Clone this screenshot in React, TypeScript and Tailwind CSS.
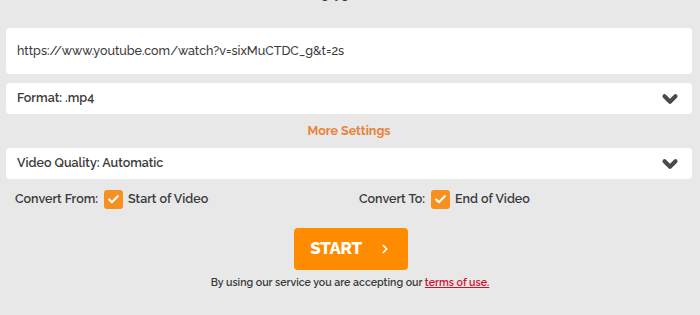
import { Check, ChevronDown, ChevronRight } from "lucide-react";

const font = { fontFamily: "Raleway, Lato, 'Open Sans', sans-serif" };

const SelectBox = ({ label }: { label: string }) => (
  <div className="flex h-[31px] items-center justify-between rounded-[4px] bg-white pl-[11px] pr-[11px]">
    <span className="text-[12.5px] font-semibold text-[#3a3a3a]">{label}</span>
    <ChevronDown className="h-[22px] w-[22px] text-[#4a4a4a]" strokeWidth={4.5} />
  </div>
);

const CheckItem = ({ label, value }: { label: string; value: string }) => (
  <div className="flex items-center text-[12.5px] font-semibold text-[#3a3a3a]">
    <span>{label}</span>
    <span className="ml-[6px] flex h-[19px] w-[19px] items-center justify-center rounded-[3px] bg-[#f7901e]">
      <Check className="h-[13px] w-[13px] text-white" strokeWidth={4} />
    </span>
    <span className="ml-[5px]">{value}</span>
  </div>
);

export default function App() {
  return (
    <div className="h-[315px] w-[700px] overflow-hidden bg-[#e8e8e8]" style={font}>
      <div className="-mt-[15px] h-[43px] text-center text-[12.5px] font-semibold text-[#3a3a3a]">
        <span className="pr-[40px]">(e.g. yg)</span>
      </div>
      <div className="px-[6px] pr-[8px]">
        <div className="flex h-[46px] items-center rounded-[4px] bg-white pl-[11px] text-[12.5px] font-medium text-[#3a3a3a]">
          https://www.youtube.com/watch?v=sixMuCTDC_g&amp;t=2s
        </div>
        <div className="mt-[9px]">
          <SelectBox label="Format: .mp4" />
        </div>
        <div className="flex h-[34px] items-center justify-center text-[12.5px] font-bold text-[#ea8239]">
          More Settings
        </div>
        <SelectBox label="Video Quality: Automatic" />
      </div>
      <div className="mt-[11px] flex">
        <div className="w-[359px] pl-[15px]">
          <CheckItem label="Convert From:" value="Start of Video" />
        </div>
        <CheckItem label="Convert To:" value="End of Video" />
      </div>
      <div className="mt-[19px] flex justify-center pl-[2px]">
        <button className="flex h-[42px] w-[114px] items-center justify-center rounded-[4px] bg-[#ff8c00] text-[17px] font-extrabold tracking-[-0.3px] text-white">
          <span>START</span>
          <ChevronRight className="ml-[16px] h-[14px] w-[14px]" strokeWidth={3} />
        </button>
      </div>
      <div className="mt-[5px] text-center text-[10.6px] font-semibold text-[#3a3a3a]">
        By using our service you are accepting our{" "}
        <a className="text-[#d0112b] underline">terms of use.</a>
      </div>
    </div>
  );
}
